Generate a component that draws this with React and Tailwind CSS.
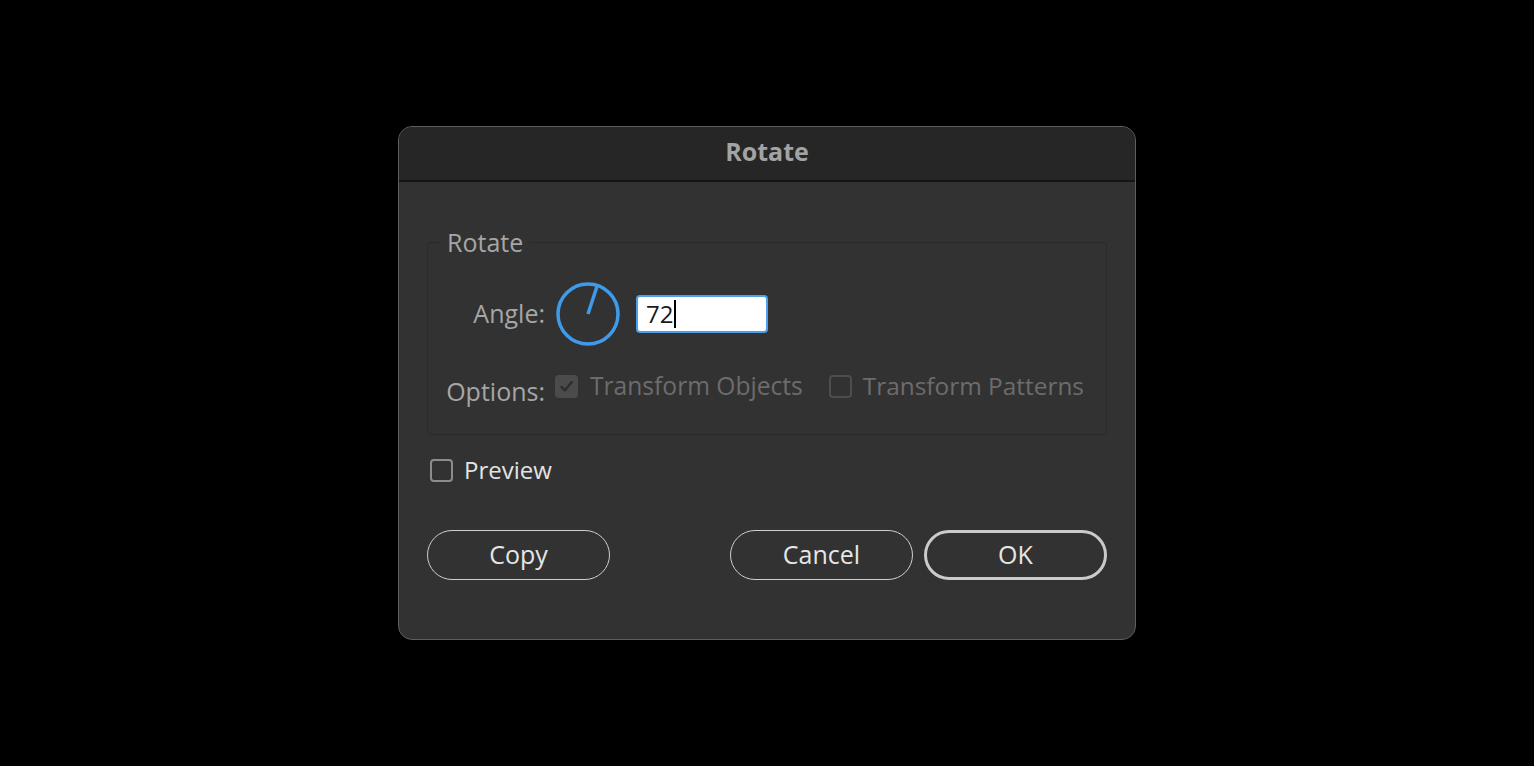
import React from "react";

const font = { fontFamily: '"Open Sans", "Noto Sans", sans-serif' };

function Dial({ angle }) {
  const r = 30;
  const rad = (angle * Math.PI) / 180;
  const x = 33 + Math.cos(rad) * (r - 1);
  const y = 33 - Math.sin(rad) * (r - 1);
  return (
    <svg width="66" height="66" viewBox="0 0 66 66" className="shrink-0">
      <circle cx="33" cy="33" r={r} fill="none" stroke="#3f9bea" strokeWidth="3.5" />
      <line x1="33" y1="33" x2={x} y2={y} stroke="#3f9bea" strokeWidth="3.5" />
    </svg>
  );
}

function Check({ checked, disabled }) {
  if (checked) {
    return (
      <span className="flex h-[23px] w-[23px] shrink-0 items-center justify-center rounded-[4px] bg-[#4b4b4b]">
        <svg width="15" height="15" viewBox="0 0 16 16">
          <path d="M2.5 8.5 L6.3 12 L13.5 3.5" fill="none" stroke="#2e2e2e" strokeWidth="2.6" strokeLinecap="round" strokeLinejoin="round" />
        </svg>
      </span>
    );
  }
  return (
    <span
      className={
        disabled
          ? "h-[23px] w-[23px] shrink-0 rounded-[4px] border-2 border-[#4d4d4d]"
          : "h-[23px] w-[23px] shrink-0 rounded-[4px] border-2 border-[#8c8c8c]"
      }
    />
  );
}

export default function App() {
  return (
    <div className="flex h-[766px] w-full items-center justify-center bg-black" style={font}>
      <div className="flex h-[514px] w-[738px] flex-col overflow-hidden rounded-[14px] border border-[#5e5e5e] bg-[#323232]">
        <div className="flex h-[55px] shrink-0 items-center justify-center border-b-2 border-[#141414] bg-[#262626] pb-[4px]">
          <span className="text-[25px] font-bold text-[#a3a3a3]">Rotate</span>
        </div>

        <div className="flex flex-1 flex-col px-[28px] pt-[46px]">
          <fieldset className="h-[207px] rounded-[4px] border border-[#2a2a2a]">
            <legend className="ml-[13px] px-[6px] text-[25px] leading-[28px] text-[#a6a6a6]">Rotate</legend>

            <div className="mt-[25px] flex items-center">
              <span className="w-[117px] text-right text-[25px] text-[#a6a6a6]">Angle:</span>
              <div className="ml-[10px]">
                <Dial angle={72} />
              </div>
              <div className="ml-[15px] flex h-[38px] w-[132px] items-center rounded-[4px] border-2 border-[#4c9fea] bg-white pl-[8px]">
                <span className="text-[24px] leading-none text-[#1a1a1a]">72</span>
                <span className="ml-[1px] h-[28px] w-[2px] bg-black" />
              </div>
            </div>

            <div className="mt-[16px] flex items-center">
              <span className="mt-[10px] w-[117px] text-right text-[25px] text-[#a6a6a6]">Options:</span>
              <div className="ml-[10px] flex items-center gap-[12px]">
                <Check checked disabled />
                <span className="text-[24.6px] text-[#6c6c6c]">Transform Objects</span>
              </div>
              <div className="ml-[26px] flex items-center gap-[11px]">
                <Check disabled />
                <span className="text-[24.4px] text-[#6c6c6c]">Transform Patterns</span>
              </div>
            </div>
          </fieldset>

          <div className="mt-[16px] flex h-[38px] items-center gap-[11px] pl-[3px]">
            <Check />
            <span className="text-[24px] text-[#e3e3e3]">Preview</span>
          </div>

          <div className="mt-[41px] flex items-center">
            <button className="h-[50px] w-[183px] rounded-full border-[1.5px] border-[#cfcfcf] text-[25px] text-[#e6e6e6]">Copy</button>
            <div className="flex-1" />
            <button className="h-[50px] w-[183px] rounded-full border-[1.5px] border-[#cfcfcf] text-[25px] text-[#e6e6e6]">Cancel</button>
            <button className="ml-[11px] h-[50px] w-[183px] rounded-full border-[3px] border-[#cbcbcb] text-[25px] text-[#e6e6e6]">OK</button>
          </div>
        </div>
      </div>
    </div>
  );
}
